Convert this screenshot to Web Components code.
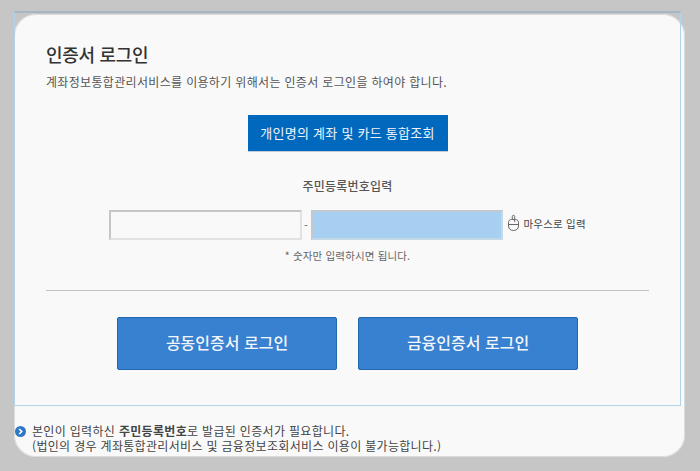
<!DOCTYPE html>
<html lang="ko"><head><meta charset="utf-8">
<style>html,body{margin:0;padding:0;background:#c6c6c6;}</style>
</head><body>
<cert-login-page>
  <span slot="title">인증서 로그인</span>
  <span slot="desc">계좌정보통합관리서비스를 이용하기 위해서는 인증서 로그인을 하여야 합니다.</span>
  <blue-button slot="query" kind="query">개인명의 계좌 및 카드 통합조회</blue-button>
  <rrn-input slot="rrn"></rrn-input>
  <blue-button slot="login" kind="login">공동인증서 로그인</blue-button>
  <blue-button slot="login" kind="login">금융인증서 로그인</blue-button>
  <span slot="note1">본인이 입력하신 <b>주민등록번호</b>로 발급된 인증서가 필요합니다.</span>
  <span slot="note2">(법인의 경우 계좌통합관리서비스 및 금융정보조회서비스 이용이 불가능합니다.)</span>
</cert-login-page>
<script>
const FONT = '"Noto Sans CJK KR","Noto Sans",sans-serif';
class CertLoginPage extends HTMLElement{
  constructor(){super();this.attachShadow({mode:'open'}).innerHTML=`<style>
  :host{display:block;width:700px;height:471px;box-sizing:border-box;padding:14px 15px 14px 14px;background:#c6c6c6;font-family:${FONT};overflow:hidden}
  .panel{height:443px;background:#f9f9f9;border-radius:22px;box-shadow:0 0 0 1px #dcdcdc inset;display:flex;flex-direction:column}
  .box{box-sizing:border-box;width:667px;height:395px;margin-top:-3px;border:1px solid #b3d3ea;border-top:2px solid #a5b6c7;padding:28px 31px 0 31px;display:flex;flex-direction:column}
  .title{font-size:18px;line-height:26px;font-weight:500;color:#333;letter-spacing:-.3px}
  .desc{font-size:12px;line-height:18px;color:#555;margin-top:6px;letter-spacing:.33px}
  .q{display:flex;justify-content:center;margin-top:24px}
  .rrn{margin-top:25px}
  hr{border:0;border-top:1px solid #c4c4c4;margin:27px 0 0;width:603px}
  .logins{display:flex;justify-content:center;gap:21px;margin-top:26px}
  .notes{display:grid;grid-template-columns:17px 1fr;padding:17px 0 0 1px;font-size:12px;line-height:15px;color:#444;letter-spacing:.32px}
  .ic{width:11px;height:11px;margin-top:3px}
  .n2{grid-column:2}
  ::slotted(b){font-weight:500}
  </style>
  <div class="panel">
    <div class="box">
      <div class="title"><slot name="title"></slot></div>
      <div class="desc"><slot name="desc"></slot></div>
      <div class="q"><slot name="query"></slot></div>
      <div class="rrn"><slot name="rrn"></slot></div>
      <hr>
      <div class="logins"><slot name="login"></slot></div>
    </div>
    <div class="notes">
      <svg class="ic" viewBox="0 0 11 11"><circle cx="5.5" cy="5.5" r="5.5" fill="#2f78c4"/><path d="M4.2 3l2.5 2.5L4.2 8" fill="none" stroke="#fff" stroke-width="1.6"/></svg>
      <div><slot name="note1"></slot></div>
      <div class="n2"><slot name="note2"></slot></div>
    </div>
  </div>`;}
}
class BlueButton extends HTMLElement{
  constructor(){super();this.attachShadow({mode:'open'}).innerHTML=`<style>
  :host{display:flex;align-items:center;justify-content:center;box-sizing:border-box;color:#fff}
  :host([kind=query]){width:200px;height:37px;padding-bottom:1px;background:#0069bd;border-bottom:1px solid #c0ccd8;font-size:13px;font-weight:400;color:#eef4fa;letter-spacing:.25px}
  :host([kind=login]){width:220px;height:53px;padding-bottom:3px;background:#3880d0;border:1px solid #1f68ad;border-radius:2px;font-size:16px;font-weight:500;color:#f2f6fb;letter-spacing:0}
  </style><slot></slot>`;}
}
class RrnInput extends HTMLElement{
  constructor(){super();this.attachShadow({mode:'open'}).innerHTML=`<style>
  :host{display:flex;flex-direction:column;align-items:center;color:#555}
  .label{font-size:12px;line-height:18px;font-weight:500;color:#555;letter-spacing:.2px}
  .row{display:grid;grid-template-columns:193px 9px 192px auto;align-items:center;margin-top:15px;margin-left:-1px;width:477px}
  .f{box-sizing:border-box;height:30px;border:2px solid;border-color:#c6c6c6 #e2e2e2 #e2e2e2 #c6c6c6;background:#f9f9f9;display:block;padding:0;margin:0;outline:0}
  .f.b{background:#a6cff1;border-color:#c0c8d0 #c4d8e8 #c4d8e8 #c0c8d0}
  .dash{font-size:11px;text-align:center;color:#666}
  .m{display:flex;align-items:center;gap:4px;padding:0 0 4px 4px;font-size:10.5px;color:#444;letter-spacing:.2px;white-space:nowrap}
  svg{width:13px;height:18px;flex:none}
  .hint{font-size:10.5px;line-height:14px;color:#666;margin-top:9px;letter-spacing:.15px}
  </style>
  <div class="label">주민등록번호입력</div>
  <div class="row">
    <input class="f" type="text"><span class="dash">-</span><input class="f b" type="text">
    <div class="m"><svg viewBox="0 0 13 18" fill="none" stroke="#666" stroke-width="1"><path d="M1.500 8.500C1.500 6.500 3 5.500 4.500 5.500h4c1.500 0 3 1 3 3V12c0 2.800-2.200 4.500-5 4.500s-5-1.700-5-4.500z"/><path d="M1.500 10.500h10M5.300 5.500V2.300c0-1.300 2.400-1.300 2.400 0v5.700"/></svg><span>마우스로 입력</span></div>
  </div>
  <div class="hint">* 숫자만 입력하시면 됩니다.</div>`;}
}
customElements.define('cert-login-page',CertLoginPage);
customElements.define('blue-button',BlueButton);
customElements.define('rrn-input',RrnInput);
</script>
</body></html>
